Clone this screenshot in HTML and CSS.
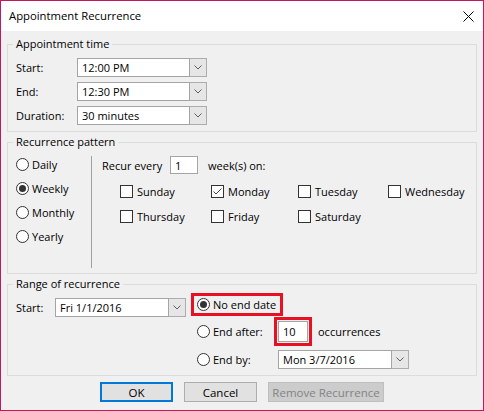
FILE: index.html
```html
<!DOCTYPE html>
<html>
<head>
<meta charset="utf-8">
<link rel="stylesheet" href="styles.css">
</head>
<body>
<div class="window">
  <div class="titlebar">
    <span class="title">Appointment Recurrence</span>
    <svg class="close" width="11" height="11" viewBox="0 0 11 11"><path d="M0.5 0.5 L10.5 10.5 M10.5 0.5 L0.5 10.5" stroke="#000" stroke-width="1" fill="none"/></svg>
  </div>
  <div class="content">
    <fieldset class="group g-time">
      <legend>Appointment time</legend>
      <div class="time-grid">
        <span class="lbl">Start:</span>
        <div class="combo w-time"><span class="combo-text">12:00 PM</span><span class="combo-btn"><svg width="8" height="5" viewBox="0 0 8 5"><path d="M0.5 0.5 L4 4 L7.5 0.5" stroke="#606060" fill="none"/></svg></span></div>
        <span class="lbl">End:</span>
        <div class="combo w-time"><span class="combo-text">12:30 PM</span><span class="combo-btn"><svg width="8" height="5" viewBox="0 0 8 5"><path d="M0.5 0.5 L4 4 L7.5 0.5" stroke="#606060" fill="none"/></svg></span></div>
        <span class="lbl">Duration:</span>
        <div class="combo w-time"><span class="combo-text">30 minutes</span><span class="combo-btn"><svg width="8" height="5" viewBox="0 0 8 5"><path d="M0.5 0.5 L4 4 L7.5 0.5" stroke="#606060" fill="none"/></svg></span></div>
      </div>
    </fieldset>

    <fieldset class="group g-pattern">
      <legend>Recurrence pattern</legend>
      <div class="pattern">
        <div class="freq">
          <label class="opt"><span class="radio"></span>Daily</label>
          <label class="opt"><span class="radio on"></span>Weekly</label>
          <label class="opt"><span class="radio"></span>Monthly</label>
          <label class="opt"><span class="radio"></span>Yearly</label>
        </div>
        <div class="weekly">
          <div class="recur-row">
            <span class="recur-lbl">Recur every</span>
            <span class="textbox w-num">1</span>
            <span>week(s) on:</span>
          </div>
          <div class="days">
            <label class="day"><span class="check"></span>Sunday</label>
            <label class="day"><span class="check"><svg width="11" height="11" viewBox="0 0 11 11"><path d="M1.5 5.5 L4 8 L9.5 2.5" stroke="#4a4a4a" stroke-width="1" fill="none"/></svg></span>Monday</label>
            <label class="day"><span class="check"></span>Tuesday</label>
            <label class="day"><span class="check"></span>Wednesday</label>
            <label class="day"><span class="check"></span>Thursday</label>
            <label class="day"><span class="check"></span>Friday</label>
            <label class="day"><span class="check"></span>Saturday</label>
          </div>
        </div>
      </div>
    </fieldset>

    <fieldset class="group g-range">
      <legend>Range of recurrence</legend>
      <div class="range">
        <div class="range-start">
          <span class="lbl start-lbl">Start:</span>
          <div class="combo w-date"><span class="combo-text">Fri 1/1/2016</span><span class="combo-btn"><svg width="8" height="5" viewBox="0 0 8 5"><path d="M0.5 0.5 L4 4 L7.5 0.5" stroke="#606060" fill="none"/></svg></span></div>
        </div>
        <div class="range-end">
          <label class="opt noend highlight"><span class="radio on"></span>No end date</label>
          <div class="end-row">
            <label class="opt end-lbl"><span class="radio"></span>End after:</label>
            <span class="textbox w-occ highlight-box">10</span>
            <span class="occ">occurrences</span>
          </div>
          <div class="end-row endby">
            <label class="opt end-lbl"><span class="radio"></span>End by:</label>
            <div class="combo w-date"><span class="combo-text">Mon 3/7/2016</span><span class="combo-btn"><svg width="8" height="5" viewBox="0 0 8 5"><path d="M0.5 0.5 L4 4 L7.5 0.5" stroke="#606060" fill="none"/></svg></span></div>
          </div>
        </div>
      </div>
    </fieldset>

    <div class="buttons">
      <button class="btn default">OK</button>
      <button class="btn">Cancel</button>
      <button class="btn disabled wide">Remove Recurrence</button>
    </div>
  </div>
</div>
</body>
</html>
```

FILE: styles.css
```css
* { box-sizing: border-box; }

html, body {
  margin: 0;
  padding: 0;
  background: #f0f0f0;
}

body {
  font-family: "Open Sans", "Noto Sans", "Liberation Sans", sans-serif;
  font-size: 11px;
  color: #000;
}

.window {
  width: 484px;
  height: 411px;
  border: 1px solid #c4175e;
  background: #f0f0f0;
  display: flex;
  flex-direction: column;
}

.titlebar {
  height: 30px;
  background: #fff;
  display: flex;
  align-items: center;
  justify-content: space-between;
  padding: 0 9px 0 8px;
  flex: none;
}

.title {
  font-size: 11.3px;
  line-height: 16px;
}

.close { display: block; }

.content {
  padding: 0 6px;
  display: flex;
  flex-direction: column;
}

.group {
  margin: 0;
  border: 1px solid #dcdcdc;
  padding: 0 8px;
  min-width: 0;
}

.group legend {
  padding: 0 3px;
  margin-left: -3px;
  line-height: 16px;
}

.g-time { margin-top: 5px; padding-top: 6px; padding-bottom: 6px; }
.g-pattern { margin-top: 2px; padding-top: 2px; padding-bottom: 5px; }
.g-range { margin-top: 2px; padding-top: 0; padding-bottom: 6px; }

/* appointment time */
.time-grid {
  display: grid;
  grid-template-columns: 61px 130px;
  grid-auto-rows: 19px;
  row-gap: 5px;
  align-items: center;
}

.combo {
  display: flex;
  height: 19px;
}

.combo-text {
  flex: 1;
  background: #fff;
  border: 1px solid #a5a5a5;
  padding-left: 4px;
  line-height: 17px;
  white-space: nowrap;
}

.combo-btn {
  width: 17px;
  flex: none;
  background: #e6e6e6;
  border: 1px solid #acacac;
  border-left: none;
  display: flex;
  align-items: center;
  justify-content: center;
}

.combo-btn svg { display: block; }

.w-time { width: 130px; }
.w-date { width: 131px; }

/* radios and checkboxes */
.opt {
  display: flex;
  align-items: center;
}

.radio {
  width: 13px;
  height: 13px;
  border: 1px solid #333;
  border-radius: 50%;
  background: #fff;
  margin-right: 3px;
  flex: none;
  display: flex;
  align-items: center;
  justify-content: center;
}

.radio.on::after {
  content: "";
  width: 7px;
  height: 7px;
  border-radius: 50%;
  background: #333;
}

.check {
  width: 13px;
  height: 13px;
  border: 1px solid #333;
  background: #fff;
  margin-right: 4px;
  flex: none;
  display: flex;
  align-items: center;
  justify-content: center;
}

.check svg { display: block; }

/* recurrence pattern */
.pattern {
  display: flex;
  align-items: flex-start;
}

.freq {
  width: 75px;
  display: flex;
  flex-direction: column;
}

.freq .opt { height: 24px; }

.weekly {
  flex: 1;
  margin-top: 4px;
  height: 112px;
  border-left: 1px solid #a0a0a0;
  padding-left: 10px;
}

.recur-row {
  display: flex;
  align-items: center;
  height: 18px;
}

.recur-lbl { width: 68px; }

.textbox {
  background: #fff;
  border: 1px solid #a5a5a5;
  padding-left: 4px;
  display: flex;
  align-items: center;
}

.w-num {
  width: 28px;
  height: 18px;
  margin-right: 10px;
}

.days {
  margin-top: 10px;
  margin-left: 18px;
  display: grid;
  grid-template-columns: 91px 87px 90px auto;
  grid-auto-rows: 14px;
  row-gap: 11px;
}

.day {
  display: flex;
  align-items: center;
  white-space: nowrap;
}

/* range */
.range {
  display: flex;
  align-items: flex-start;
}

.range-start {
  display: flex;
  align-items: center;
  margin-top: 6px;
}

.start-lbl { width: 39px; }

.range-end {
  margin-left: 8px;
  display: flex;
  flex-direction: column;
}

.noend {
  margin-top: 4px;
  width: 86px;
  height: 17px;
  padding-left: 3px;
}

.highlight {
  outline: 3px solid #e81123;
}

.end-row {
  display: flex;
  align-items: center;
  margin-top: 8px;
  padding-left: 3px;
}

.end-lbl { width: 81px; }

.w-occ {
  width: 30px;
  height: 21px;
}

.highlight-box {
  outline: 3px solid #e81123;
  outline-offset: 1px;
}

.occ { margin-left: 10px; }

/* buttons */
.buttons {
  display: flex;
  justify-content: center;
  gap: 11px;
  margin-top: 6px;
}

.btn {
  font: inherit;
  font-size: 11.5px;
  color: #000;
  width: 73px;
  height: 20px;
  padding: 0;
  background: #e1e1e1;
  border: 1px solid #adadad;
  border-radius: 0;
}

.btn.default {
  border: 2px solid #0078d7;
}

.btn.wide { width: 116px; }

.btn.disabled {
  background: #cccccc;
  border-color: #bfbfbf;
  color: #838383;
}
```
